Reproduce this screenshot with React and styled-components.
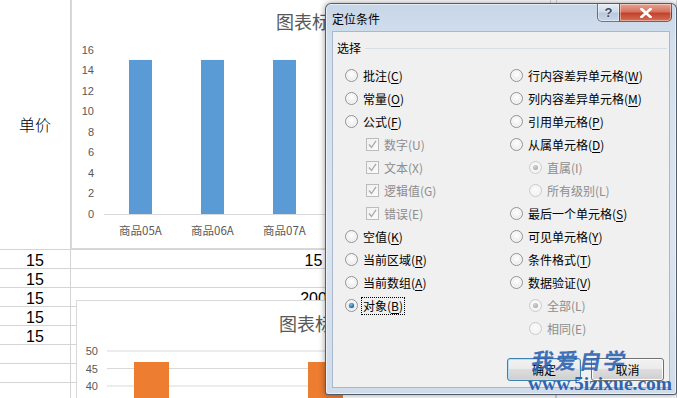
import React from "react"
import styled, { createGlobalStyle } from "styled-components"

const GlobalStyle = createGlobalStyle`
  html, body { margin: 0; padding: 0; background: #fff; }
  body { font-family: "Noto Sans CJK SC", "Noto Sans", sans-serif; }
  u { text-decoration: underline; text-underline-offset: 2px; }
`

const Page = styled.div`
  position: relative;
  width: 677px;
  height: 398px;
  overflow: hidden;
  background: #fff;
`

/* ---------- spreadsheet ---------- */

const Sheet = styled.div`
  display: grid;
  grid-template-columns: 71px 486px 1fr;
  grid-template-rows: 250px repeat(8, 19px);
`

const Cell = styled.div`
  box-sizing: border-box;
  border-right: 1px solid #d4d4d4;
  border-bottom: 1px solid #d4d4d4;
  display: flex;
  justify-content: center;
  align-items: ${(p) => (p.$tall ? "center" : "flex-start")};
  padding-top: ${(p) => (p.$tall ? "0" : "1px")};
  font-family: ${(p) =>
    p.$tall ? `"Noto Sans CJK SC", sans-serif` : `"Liberation Sans", Arial, sans-serif`};
  font-size: 16px;
  font-weight: ${(p) => (p.$tall ? 300 : 400)};
  line-height: 19px;
  color: #000;
`

const ChartBox = styled.div`
  position: absolute;
  left: ${(p) => p.$x}px;
  top: ${(p) => p.$y}px;
  width: 480px;
  height: ${(p) => p.$h}px;
  box-sizing: border-box;
  border: 1px solid #d9d9d9;
  background: #fff;
  overflow: hidden;
  svg { display: block; }
  text { font-family: "Noto Sans CJK SC", "Liberation Sans", sans-serif; fill: #595959; }
`

function PriceChart() {
  const ticks = [0, 2, 4, 6, 8, 10, 12, 14, 16]
  const y = (v) => 214 - v * 10.27
  const cats = ["商品05A", "商品06A", "商品07A", "商品08A"]
  return (
    <ChartBox $x={71} $y={-1} $h={250}>
      <svg width="478" height="248">
        <text x="204" y="29" fontSize="18">图表标题</text>
        {ticks.map((t) => (
          <text key={t} x="22" y={y(t) + 4} fontSize="11" textAnchor="end"
            style={{ fontFamily: "Liberation Sans, sans-serif" }}>{t}</text>
        ))}
        <line x1="32" y1="214.5" x2="478" y2="214.5" stroke="#d9d9d9" />
        {cats.map((c, i) => (
          <g key={c}>
            <rect x={57 + i * 72} y={y(15)} width="23" height={15 * 10.27} fill="#5b9bd5" />
            <text x={68.5 + i * 72} y="235" fontSize="11.5" textAnchor="middle">{c}</text>
          </g>
        ))}
      </svg>
    </ChartBox>
  )
}

function QtyChart() {
  const ticks = [50, 45, 40]
  const y = (v) => 50 + (50 - v) * 3.5
  return (
    <ChartBox $x={76} $y={300} $h={110}>
      <svg width="478" height="108">
        <text x="202" y="30" fontSize="18">图表标题</text>
        {ticks.map((t) => (
          <g key={t}>
            <text x="21" y={y(t) + 4} fontSize="11" textAnchor="end"
              style={{ fontFamily: "Liberation Sans, sans-serif" }}>{t}</text>
            <line x1="30" y1={y(t)} x2="478" y2={y(t)} stroke="#d9d9d9" />
          </g>
        ))}
        <rect x="57" y="61" width="35" height="60" fill="#ed7d31" />
        <rect x="231" y="61" width="35" height="60" fill="#ed7d31" />
      </svg>
    </ChartBox>
  )
}

/* ---------- dialog ---------- */

const Dialog = styled.div`
  position: absolute;
  left: 325px;
  top: 3px;
  width: 352px;
  height: 392px;
  box-sizing: border-box;
  display: flex;
  flex-direction: column;
  border: 1px solid rgba(40, 50, 60, 0.75);
  border-radius: 6px 6px 3px 3px;
  background: linear-gradient(180deg, #c7d6e8 0%, #d3dfed 10%, #dbe5f1 60%, #d1dcea 100%);
  box-shadow: 0 0 6px rgba(0, 0, 0, 0.4), inset 0 0 0 1px rgba(255, 255, 255, 0.55);
  font-family: "Noto Sans CJK SC", "Noto Sans", sans-serif;
  font-size: 12px;
  line-height: 16px;
  color: #000;
`

const TitleBar = styled.div`
  height: 27px;
  display: flex;
  align-items: center;
  padding: 0 4px 0 6px;
`

const Title = styled.div`
  flex: 1;
  padding-top: 2px;
`

const Controls = styled.div`
  align-self: flex-start;
  display: flex;
`

const CtrlButton = styled.div`
  width: ${(p) => p.$w}px;
  height: 18px;
  box-sizing: border-box;
  display: flex;
  align-items: center;
  justify-content: center;
  border: 1px solid rgba(60, 70, 80, 0.7);
  border-top: none;
  border-radius: ${(p) => (p.$close ? "0 0 5px 0" : "0 0 0 5px")};
  margin-left: ${(p) => (p.$close ? "-1px" : "0")};
  background: ${(p) =>
    p.$close
      ? "linear-gradient(180deg, #e8a493 0%, #d5735f 45%, #c4422b 55%, #d2705a 100%)"
      : "linear-gradient(180deg, #e6eef7 0%, #cfdbe8 45%, #b9c9dc 55%, #c9d6e6 100%)"};
  box-shadow: inset 0 0 0 1px rgba(255, 255, 255, 0.4);
  color: ${(p) => (p.$close ? "#fff" : "#3c4a5c")};
  font-family: "Liberation Sans", Arial, sans-serif;
  font-weight: bold;
  font-size: 13px;
  text-shadow: ${(p) => (p.$close ? "0 0 2px #6a1c10" : "0 0 2px #fff")};
`

const Client = styled.div`
  flex: 1;
  margin: 0 6px 6px 6px;
  border: 1px solid #a9b8ca;
  background: #f0f0f0;
  display: flex;
  flex-direction: column;
`

const GroupHeading = styled.div`
  margin-top: 8px;
  height: 16px;
  padding: 0 2px 0 4px;
  display: flex;
  align-items: center;
  gap: 4px;
  &::after {
    content: "";
    flex: 1;
    height: 1px;
    background: #d5dfe5;
  }
`

const Options = styled.div`
  margin-top: 8px;
  display: grid;
  grid-template-columns: 165px 1fr;
  padding-left: 12px;
`

const Column = styled.div`
  display: flex;
  flex-direction: column;
`

const Row = styled.div`
  height: 23px;
  display: flex;
  align-items: center;
  gap: 5px;
  padding-left: ${(p) => p.$indent || 0}px;
  color: ${(p) => (p.$disabled ? "#8d8d8d" : "#000")};
`

const RadioDot = styled.span`
  width: 13px;
  height: 13px;
  box-sizing: border-box;
  border-radius: 50%;
  flex: none;
  border: 1px solid ${(p) => (p.$disabled ? "#cacaca" : "#939393")};
  background: ${(p) =>
    p.$disabled
      ? "radial-gradient(circle at 50% 40%, #fbfbfb 0%, #eeeeee 100%)"
      : "radial-gradient(circle at 50% 40%, #ffffff 0%, #e2e2e2 100%)"};
  box-shadow: inset 0 0 0 1px #f6f6f6;
  display: flex;
  align-items: center;
  justify-content: center;
  &::after {
    content: "";
    display: ${(p) => (p.$checked ? "block" : "none")};
    width: 5px;
    height: 5px;
    border-radius: 50%;
    background: ${(p) =>
      p.$disabled
        ? "radial-gradient(circle at 40% 35%, #d4d4d4, #9c9c9c)"
        : "radial-gradient(circle at 40% 35%, #7fc4ef, #1b5e98 70%, #0f3d6a)"};
    box-shadow: ${(p) => (p.$disabled ? "none" : "0 0 1px #2a6aa0")};
  }
`

const CheckBox = styled.span`
  width: 13px;
  height: 13px;
  box-sizing: border-box;
  flex: none;
  border: 1px solid #bcbcbc;
  background: linear-gradient(135deg, #f0f0f0, #fbfbfb);
  display: flex;
  align-items: center;
  justify-content: center;
  svg { display: block; }
`

const Label = styled.span`
  padding: 0 1px;
  margin-left: -1px;
  outline: ${(p) => (p.$focus ? "1px dotted #000" : "none")};
`

function Option({ label, accel, check, checked, disabled, indent, focus }) {
  return (
    <Row $disabled={disabled} $indent={indent}>
      {check ? (
        <CheckBox>
          <svg width="9" height="9" viewBox="0 0 9 9">
            <polyline points="1,4.5 3.5,7.5 8,0.8" fill="none" stroke="#a9a9a9" strokeWidth="1.3" />
          </svg>
        </CheckBox>
      ) : (
        <RadioDot $checked={checked} $disabled={disabled} />
      )}
      <Label $focus={focus}>
        {label}({disabled ? accel : <u>{accel}</u>})
      </Label>
    </Row>
  )
}

const leftOptions = [
  { label: "批注", accel: "C" },
  { label: "常量", accel: "O" },
  { label: "公式", accel: "F" },
  { label: "数字", accel: "U", check: true, disabled: true, indent: 21 },
  { label: "文本", accel: "X", check: true, disabled: true, indent: 21 },
  { label: "逻辑值", accel: "G", check: true, disabled: true, indent: 21 },
  { label: "错误", accel: "E", check: true, disabled: true, indent: 21 },
  { label: "空值", accel: "K" },
  { label: "当前区域", accel: "R" },
  { label: "当前数组", accel: "A" },
  { label: "对象", accel: "B", checked: true, focus: true },
]

const rightOptions = [
  { label: "行内容差异单元格", accel: "W" },
  { label: "列内容差异单元格", accel: "M" },
  { label: "引用单元格", accel: "P" },
  { label: "从属单元格", accel: "D" },
  { label: "直属", accel: "I", disabled: true, checked: true, indent: 19 },
  { label: "所有级别", accel: "L", disabled: true, indent: 19 },
  { label: "最后一个单元格", accel: "S" },
  { label: "可见单元格", accel: "Y" },
  { label: "条件格式", accel: "T" },
  { label: "数据验证", accel: "V" },
  { label: "全部", accel: "L", disabled: true, checked: true, indent: 19 },
  { label: "相同", accel: "E", disabled: true, indent: 19 },
]

const ButtonRow = styled.div`
  margin-top: auto;
  display: flex;
  justify-content: flex-end;
  gap: 10px;
  padding: 0 5px 6px 0;
`

const PushButton = styled.button`
  width: ${(p) => p.$w}px;
  height: 23px;
  box-sizing: border-box;
  padding: 0;
  border-radius: 3px;
  border: 1px solid ${(p) => (p.$default ? "#3c7fb1" : "#707070")};
  background: linear-gradient(180deg, #f2f2f2 0%, #ebebeb 45%, #dddddd 50%, #cfcfcf 100%);
  box-shadow: inset 0 0 0 1px ${(p) => (p.$default ? "#b6e0f5" : "#fcfcfc")};
  font-family: "Noto Sans CJK SC", sans-serif;
  font-size: 12px;
  color: #000;
`

const Watermark = styled.div`
  position: absolute;
  left: ${(p) => p.$x}px;
  top: ${(p) => p.$y}px;
  color: #2f63b0;
  white-space: nowrap;
  pointer-events: none;
`

const WmTitle = styled(Watermark)`
  font-family: "Noto Sans CJK SC", sans-serif;
  font-weight: 700;
  font-size: 22px;
  line-height: 28px;
  letter-spacing: 2px;
  transform: skewX(-10deg);
  opacity: 0.9;
`

const WmUrl = styled(Watermark)`
  font-family: "Liberation Serif", "Times New Roman", serif;
  font-weight: bold;
  font-size: 19.5px;
  line-height: 22px;
`

export default function App() {
  const leftVals = ["15", "15", "15", "15", "15", "", "", ""]
  const midVals = ["15", "", "200", "", "", "", "", ""]
  return (
    <Page>
      <GlobalStyle />
      <Sheet>
        <Cell $tall>单价</Cell>
        <Cell />
        <Cell />
        {leftVals.map((v, i) => (
          <React.Fragment key={i}>
            <Cell>{v}</Cell>
            <Cell>{midVals[i]}</Cell>
            <Cell />
          </React.Fragment>
        ))}
      </Sheet>
      <PriceChart />
      <QtyChart />

      <Dialog>
        <TitleBar>
          <Title>定位条件</Title>
          <Controls>
            <CtrlButton $w={23}>?</CtrlButton>
            <CtrlButton $w={53} $close>
              <svg width="12" height="10" viewBox="0 0 12 10">
                <path d="M1.5 1 L10.5 9 M10.5 1 L1.5 9" stroke="#fff" strokeWidth="2.6" strokeLinecap="square" />
              </svg>
            </CtrlButton>
          </Controls>
        </TitleBar>
        <Client>
          <GroupHeading>选择</GroupHeading>
          <Options>
            <Column>
              {leftOptions.map((o) => (
                <Option key={o.label} {...o} />
              ))}
            </Column>
            <Column>
              {rightOptions.map((o) => (
                <Option key={o.label} {...o} />
              ))}
            </Column>
          </Options>
          <ButtonRow>
            <PushButton $w={74} $default>确定</PushButton>
            <PushButton $w={73}>取消</PushButton>
          </ButtonRow>
        </Client>
      </Dialog>

      <WmTitle $x={532} $y={345}>我爱自学</WmTitle>
      <WmUrl $x={528} $y={373}>www.5izixue.com</WmUrl>
    </Page>
  )
}
